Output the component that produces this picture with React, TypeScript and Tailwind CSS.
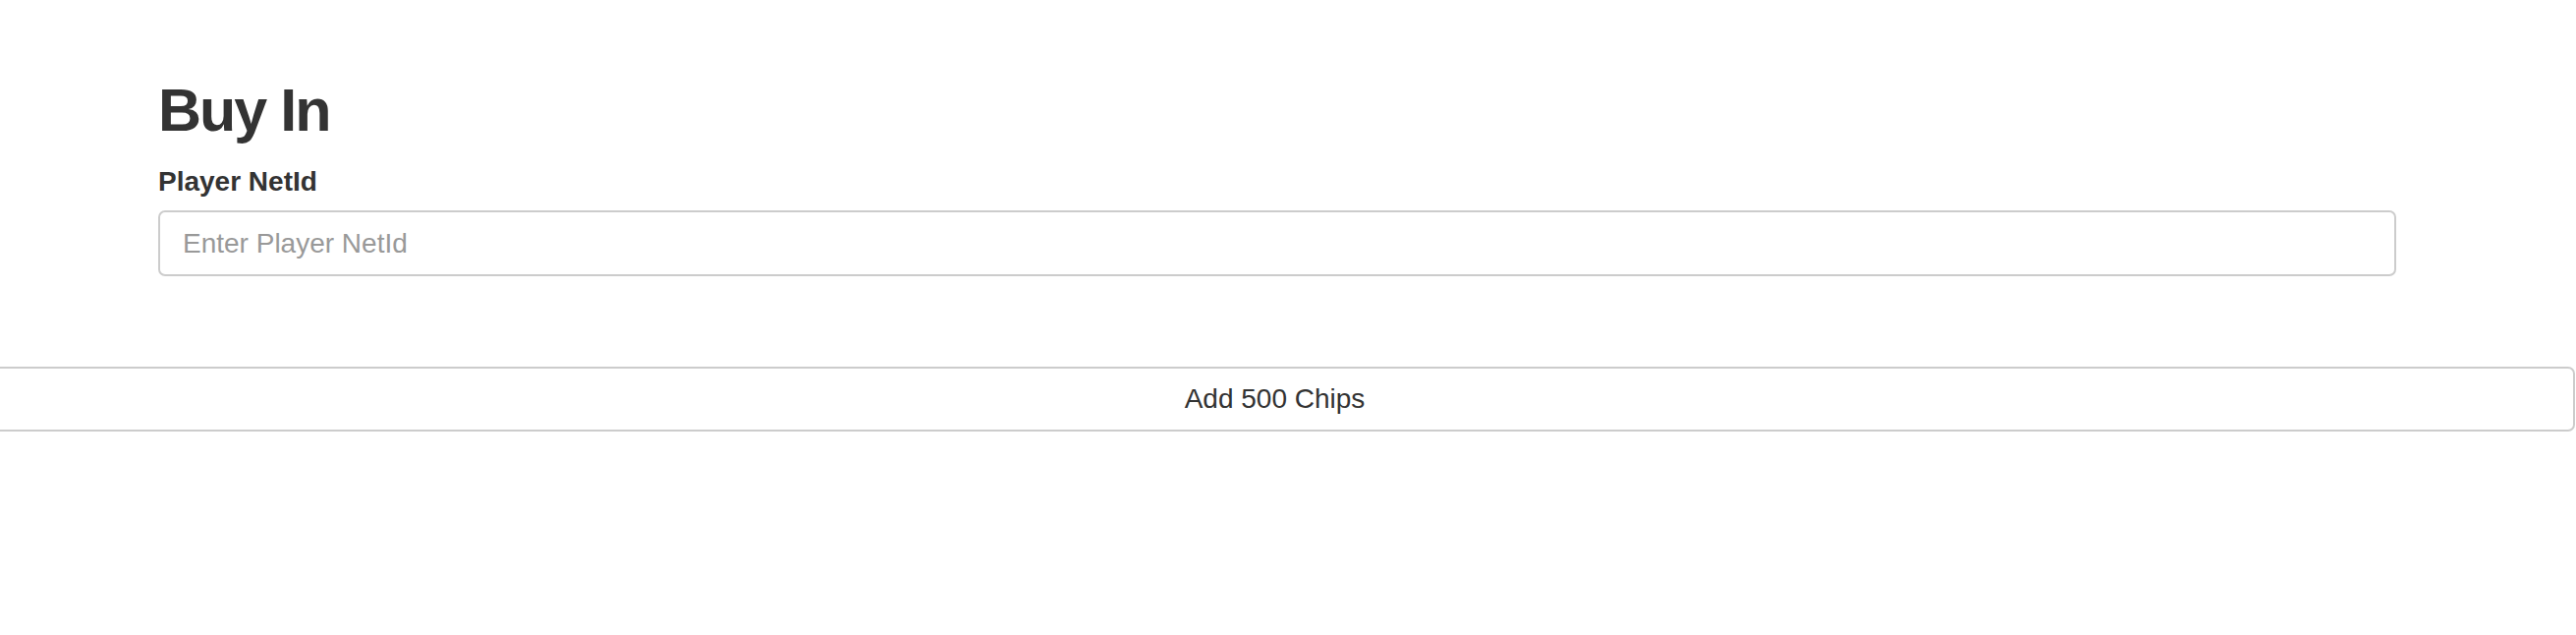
export default function App() {
  return (
    <div
      className="min-h-[646px] w-full overflow-hidden bg-white text-[#333]"
      style={{ fontFamily: '"Liberation Sans", Arial, Helvetica, sans-serif' }}
    >
      <div className="pl-[161px] pr-[183px] pt-[82px]">
        <h1 className="text-[61px] font-bold leading-[61px] tracking-[-2px]">Buy In</h1>
        <label htmlFor="netid" className="mt-[28px] block text-[28px] font-bold leading-[28px]">
          Player NetId
        </label>
        <input
          id="netid"
          type="text"
          placeholder="Enter Player NetId"
          className="mt-[15px] block h-[67px] w-full rounded-[7px] border-2 border-[#cccccc] bg-white pl-[23px] text-[28px] text-[#555] placeholder:text-[#999] focus:outline-none"
        />
      </div>
      <div className="mt-[92px]">
        <button
          type="button"
          className="ml-[-26px] block h-[66px] w-[calc(100%+25px)] rounded-[7px] border-2 border-[#cccccc] bg-white text-[28px] text-[#333]"
        >
          Add 500 Chips
        </button>
      </div>
    </div>
  )
}
